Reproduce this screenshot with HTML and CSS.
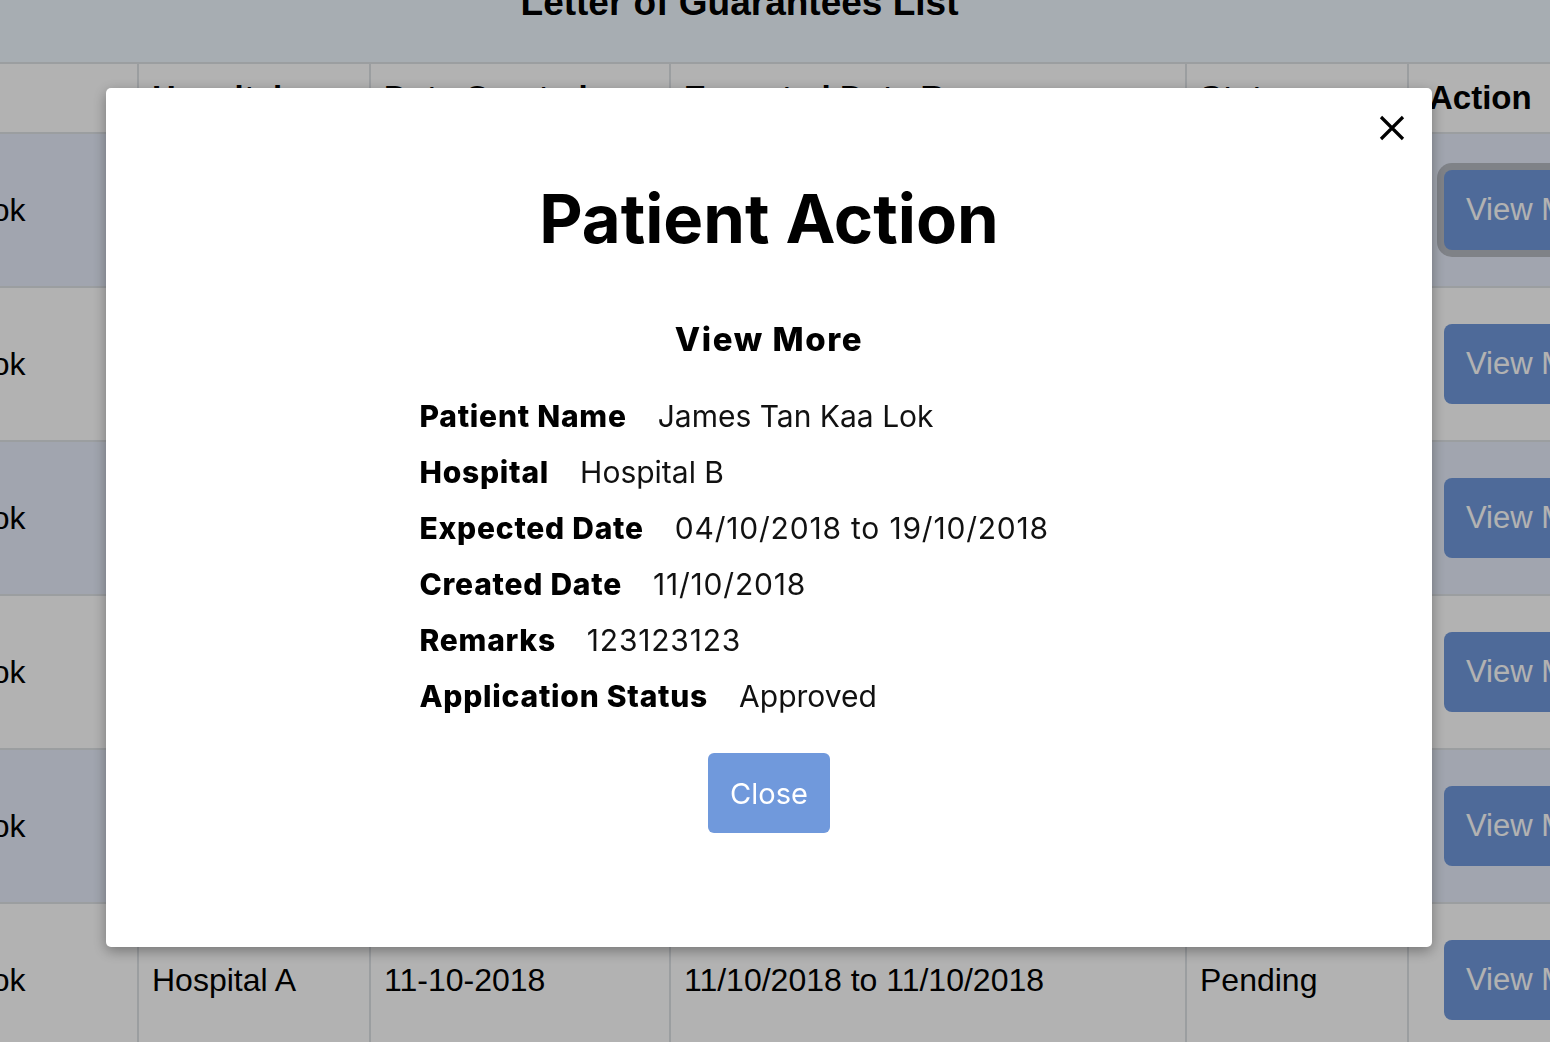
FILE: index.html
```html
<!DOCTYPE html>
<html lang="en">
<head>
<meta charset="utf-8">
<title>Letter of Guarantees List</title>
<link rel="stylesheet" href="styles.css">
</head>
<body>
<div class="page">
  <header class="title-band">
    <h1 class="page-title">Letter of Guarantees List</h1>
  </header>
  <table class="log-table">
    <colgroup>
      <col class="c-name"><col class="c-hosp"><col class="c-created"><col class="c-range"><col class="c-status"><col class="c-action">
    </colgroup>
    <thead>
      <tr>
        <th>Patient Name</th>
        <th>Hospital</th>
        <th>Date Created</th>
        <th>Expected Date Range</th>
        <th>Status</th>
        <th class="action">Action</th>
      </tr>
    </thead>
    <tbody>
      <tr class="odd">
        <td>James Tan Kaa Lok</td><td>Hospital B</td><td>11-10-2018</td><td>04/10/2018 to 19/10/2018</td><td>Approved</td>
        <td class="action"><button class="view-btn focused">View More</button></td>
      </tr>
      <tr>
        <td>James Tan Kaa Lok</td><td>Hospital A</td><td>11-10-2018</td><td>11/10/2018 to 11/10/2018</td><td>Pending</td>
        <td class="action"><button class="view-btn">View More</button></td>
      </tr>
      <tr class="odd">
        <td>James Tan Kaa Lok</td><td>Hospital A</td><td>11-10-2018</td><td>11/10/2018 to 11/10/2018</td><td>Pending</td>
        <td class="action"><button class="view-btn">View More</button></td>
      </tr>
      <tr>
        <td>James Tan Kaa Lok</td><td>Hospital A</td><td>11-10-2018</td><td>11/10/2018 to 11/10/2018</td><td>Pending</td>
        <td class="action"><button class="view-btn">View More</button></td>
      </tr>
      <tr class="odd">
        <td>James Tan Kaa Lok</td><td>Hospital A</td><td>11-10-2018</td><td>11/10/2018 to 11/10/2018</td><td>Pending</td>
        <td class="action"><button class="view-btn">View More</button></td>
      </tr>
      <tr>
        <td>James Tan Kaa Lok</td><td>Hospital A</td><td>11-10-2018</td><td>11/10/2018 to 11/10/2018</td><td>Pending</td>
        <td class="action"><button class="view-btn">View More</button></td>
      </tr>
    </tbody>
  </table>
</div>

<div class="overlay">
  <div class="modal" role="dialog" aria-labelledby="modal-title">
    <div class="modal-top">
      <button class="modal-x" aria-label="Close">
        <svg width="26" height="26" viewBox="0 0 26 26"><path d="M2 2 L24 24 M24 2 L2 24" stroke="#000" stroke-width="3.2" fill="none"/></svg>
      </button>
    </div>
    <h2 class="modal-title" id="modal-title">Patient Action</h2>
    <h3 class="modal-sub">View More</h3>
    <dl class="details">
      <div class="detail"><dt>Patient Name</dt><dd>James Tan Kaa Lok</dd></div>
      <div class="detail"><dt>Hospital</dt><dd>Hospital B</dd></div>
      <div class="detail"><dt>Expected Date</dt><dd class="num">04/10/2018 to 19/10/2018</dd></div>
      <div class="detail"><dt>Created Date</dt><dd class="num">11/10/2018</dd></div>
      <div class="detail"><dt>Remarks</dt><dd class="num">123123123</dd></div>
      <div class="detail"><dt>Application Status</dt><dd>Approved</dd></div>
    </dl>
    <div class="modal-actions">
      <button class="close-btn">Close</button>
    </div>
  </div>
</div>
</body>
</html>
```

FILE: styles.css
```css
html, body {
  margin: 0;
  padding: 0;
  overflow: hidden;
  height: 100%;
  background: #fff;
}

body {
  font-family: "Liberation Sans", Arial, sans-serif;
  color: #000;
}

.page {
  width: 2015px;
  margin-left: -268px;
}

.title-band {
  display: flow-root;
  height: 62px;
  background: #f0f8ff;
  border-bottom: 2px solid #dee2e6;
  text-align: center;
}

.page-title {
  margin: -18px 0 0;
  font-size: 37px;
  line-height: 42px;
  font-weight: 700;
}

.log-table {
  width: 2015px;
  table-layout: fixed;
  border-collapse: separate;
  border-spacing: 0;
}

.c-name { width: 407px; }
.c-hosp { width: 232px; }
.c-created { width: 300px; }
.c-range { width: 516px; }
.c-status { width: 222px; }
.c-action { width: 338px; }

.log-table th,
.log-table td {
  text-align: left;
  border-right: 2px solid #dee2e6;
  border-bottom: 2px solid #dee2e6;
  padding: 0 13px;
  white-space: nowrap;
  overflow: hidden;
}

.log-table th:last-child,
.log-table td:last-child {
  border-right: 0;
}

.log-table th {
  height: 68px;
  box-sizing: border-box;
  font-size: 33px;
  line-height: 38px;
  font-weight: 700;
  padding-top: 15px;
  padding-bottom: 15px;
  background: #fff;
}

.log-table td {
  font-size: 32px;
  line-height: 40px;
  padding-top: 36px;
  padding-bottom: 36px;
  height: 80px;
  vertical-align: middle;
  background: #fff;
}

.log-table tr.odd td {
  background: #e7edfb;
}

.log-table .action {
  padding-left: 20px;
}

.view-btn {
  display: block;
  height: 80px;
  margin-left: 15px;
  padding: 0 22px;
  border: 0;
  border-radius: 8px;
  background: #7099dc;
  color: #fff;
  font-family: "Liberation Sans", Arial, sans-serif;
  font-size: 31px;
  white-space: nowrap;
}

.view-btn.focused {
  box-shadow: 0 0 0 7px #b6bac2;
}

/* modal */
.overlay {
  position: fixed;
  inset: 0;
  background: rgba(0, 0, 0, 0.3);
  display: flex;
  justify-content: center;
  align-items: flex-start;
  padding: 88px 12px 0 0;
}

.modal {
  width: 1326px;
  box-sizing: border-box;
  background: #fff;
  border-radius: 5px;
  box-shadow: 0 4px 14px rgba(0, 0, 0, 0.35);
  padding: 27px 27px 114px;
  font-family: Inter, "Noto Sans", sans-serif;
  color: #000;
  text-align: center;
}

.modal-top {
  display: flex;
  justify-content: flex-end;
  height: 26px;
}

.modal-x {
  width: 26px;
  height: 26px;
  padding: 0;
  border: 0;
  background: none;
  display: block;
}

.modal-x svg {
  display: block;
}

.modal-title {
  margin: 38px 0 0;
  font-size: 67px;
  line-height: 79px;
  font-weight: 700;
}

.modal-sub {
  margin: 63px 0 0;
  font-size: 33px;
  line-height: 37px;
  font-weight: 800;
  letter-spacing: 1.6px;
}

.details {
  width: 700px;
  margin: 30px auto 0;
  padding-left: 1px;
  text-align: left;
}

.detail {
  display: flex;
  gap: 31px;
  font-size: 30px;
  line-height: 56px;
}

.detail dt {
  font-weight: 800;
  letter-spacing: 0.75px;
}

.detail dd {
  margin: 0;
  color: #111;
}

.detail dd.num {
  letter-spacing: 0.8px;
}

.modal-actions {
  margin-top: 29px;
  display: flex;
  justify-content: center;
}

.close-btn {
  width: 122px;
  height: 80px;
  border: 0;
  border-radius: 6px;
  background: #7099dc;
  color: #fff;
  font-family: Inter, "Noto Sans", sans-serif;
  font-size: 29px;
  padding: 0;
}
```
